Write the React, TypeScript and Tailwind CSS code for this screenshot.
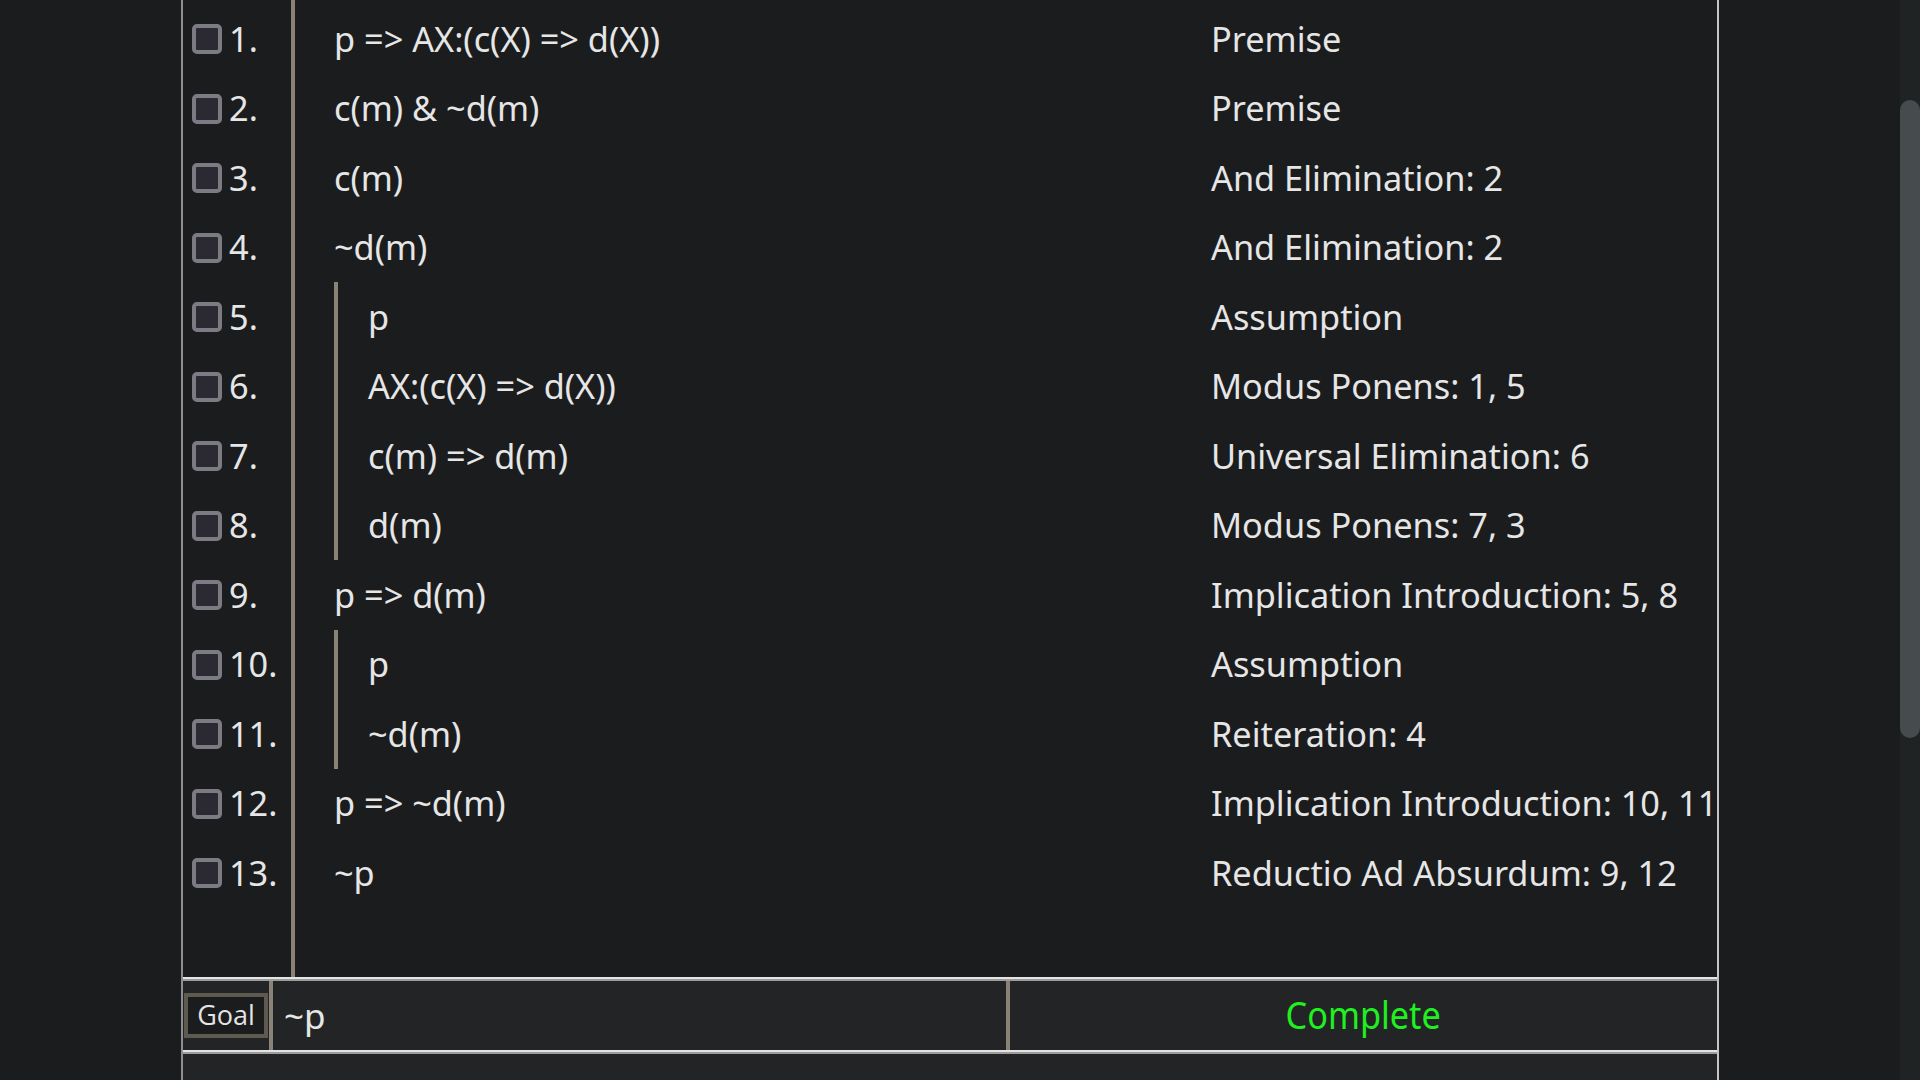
import React from "react";

type Row = { n: number; f: string; j: string; depth: number };

const rows: Row[] = [
  { n: 1, f: "p => AX:(c(X) => d(X))", j: "Premise", depth: 0 },
  { n: 2, f: "c(m) & ~d(m)", j: "Premise", depth: 0 },
  { n: 3, f: "c(m)", j: "And Elimination: 2", depth: 0 },
  { n: 4, f: "~d(m)", j: "And Elimination: 2", depth: 0 },
  { n: 5, f: "p", j: "Assumption", depth: 1 },
  { n: 6, f: "AX:(c(X) => d(X))", j: "Modus Ponens: 1, 5", depth: 1 },
  { n: 7, f: "c(m) => d(m)", j: "Universal Elimination: 6", depth: 1 },
  { n: 8, f: "d(m)", j: "Modus Ponens: 7, 3", depth: 1 },
  { n: 9, f: "p => d(m)", j: "Implication Introduction: 5, 8", depth: 0 },
  { n: 10, f: "p", j: "Assumption", depth: 1 },
  { n: 11, f: "~d(m)", j: "Reiteration: 4", depth: 1 },
  { n: 12, f: "p => ~d(m)", j: "Implication Introduction: 10, 11", depth: 0 },
  { n: 13, f: "~p", j: "Reductio Ad Absurdum: 9, 12", depth: 0 },
];

export default function App() {
  return (
    <div
      className="w-[1920px] h-[1080px] bg-[#1b1c1e] flex overflow-hidden text-[#e6e6e6]"
      style={{ fontFamily: '"Noto Sans", "Open Sans", sans-serif' }}
    >
      <div className="flex-1 flex justify-center min-w-0">
        <div className="w-[1538px] shrink-0 h-full flex flex-col border-l-2 border-r-2 border-l-[#8e8e8e] border-r-[#c4c4c4]">
          {/* proof area */}
          <div className="h-[977px] shrink-0 flex">
            <div className="w-[108px] shrink-0 pt-[4px] flex flex-col">
              {rows.map((r) => (
                <div key={r.n} className="h-[69.5px] flex items-center pl-[9px] shrink-0">
                  <div className="w-[30px] h-[30px] mt-[1px] rounded-[5px] border-[4px] border-[#7c7b83] bg-[#2b2a33] shrink-0" />
                  <span className="ml-[7px] text-[34.3px] leading-none">{r.n}.</span>
                </div>
              ))}
            </div>
            <div className="w-[4px] shrink-0 bg-[#8a8276]" />
            <div className="flex-1 min-w-0 pt-[4px] flex flex-col">
              {rows.map((r) => (
                <div key={r.n} className="h-[69.5px] flex shrink-0">
                  <div className="w-[916px] shrink-0 pl-[39px] flex">
                    {r.depth > 0 && <div className="w-[4px] h-full bg-[#8a8276] mr-[30px]" />}
                    <div className="flex items-center text-[34.3px] leading-none whitespace-pre">{r.f}</div>
                  </div>
                  <div className="flex-1 min-w-0 flex items-center text-[34.3px] leading-none whitespace-pre">
                    {r.j}
                  </div>
                </div>
              ))}
            </div>
          </div>
          {/* goal bar */}
          <div className="h-[2px] shrink-0 bg-[#e4e4e4]" />
          <div className="h-[2px] shrink-0 bg-[#9c9c9c]" />
          <div className="h-[69px] shrink-0 bg-[#232426] flex">
            <div className="flex items-center pl-[1px]">
              <div
                className="w-[84px] h-[45px] border-4 border-[#5e5a50] bg-[#1b1c1e] flex items-center justify-center text-[27px] text-[#e4e4e4]"
                style={{ fontFamily: '"Open Sans", "Noto Sans", sans-serif' }}
              >
                Goal
              </div>
            </div>
            <div className="w-[4px] ml-[1px] bg-[#8a8276]" />
            <div className="w-[733px] pl-[11px] flex items-center text-[35px] leading-none">~p</div>
            <div className="w-[4px] bg-[#8a8276]" />
            <div className="flex-1 flex items-center justify-center pb-[3px]">
              <span className="text-[38px] text-[#1ff01f] leading-none scale-x-90 inline-block">Complete</span>
            </div>
          </div>
          <div className="h-[2px] shrink-0 bg-[#e4e4e4]" />
          <div className="h-[2px] shrink-0 bg-[#9c9c9c]" />
          <div className="flex-1 bg-[#232426]" />
        </div>
      </div>
      {/* scrollbar */}
      <div className="w-[20px] shrink-0 h-full bg-[#202324] pt-[100px]">
        <div className="w-[20px] h-[638px] rounded-[10px] bg-[#464b4e]" />
      </div>
    </div>
  );
}
